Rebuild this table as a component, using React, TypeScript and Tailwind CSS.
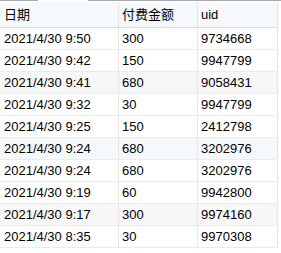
import React from "react";

interface Payment {
  date: string;
  amount: string;
  uid: string;
  bg?: string;
}

const payments: Payment[] = [
  { date: "2021/4/30 9:50", amount: "300", uid: "9734668" },
  { date: "2021/4/30 9:42", amount: "150", uid: "9947799" },
  { date: "2021/4/30 9:41", amount: "680", uid: "9058431", bg: "bg-[#f7f7f7]" },
  { date: "2021/4/30 9:32", amount: "30", uid: "9947799" },
  { date: "2021/4/30 9:25", amount: "150", uid: "2412798" },
  { date: "2021/4/30 9:24", amount: "680", uid: "3202976", bg: "bg-[#f5f9fc]" },
  { date: "2021/4/30 9:24", amount: "680", uid: "3202976" },
  { date: "2021/4/30 9:19", amount: "60", uid: "9942800" },
  { date: "2021/4/30 9:17", amount: "300", uid: "9974160", bg: "bg-[#f7f7f7]" },
  { date: "2021/4/30 8:35", amount: "30", uid: "9970308" },
];

const font = {
  fontFamily: '"Liberation Sans", "Noto Sans CJK SC", sans-serif',
};

export default function App() {
  return (
    <div className="w-[281px] h-[253px] bg-white text-black text-[13px]" style={font}>
      {/* tab strip edge */}
      <div className="flex h-px">
        <div className="w-[38px] bg-[#a8a8a8]" />
        <div className="w-[50px] bg-white" />
        <div className="flex-1 bg-[#a8a8a8]" />
      </div>
      <div className="h-px" />

      <div className="w-[278px]">
        <div className="grid grid-cols-[119px_79px_80px] h-[26px] bg-[#f6f9fb] border-b border-[#dedede]">
          <div className="flex items-center pl-1 border-r border-[#e3e3e3]">日期</div>
          <div className="flex items-center pl-[3px] border-r border-[#e3e3e3]">付费金额</div>
          <div className="flex items-center pl-[3px] border-r border-[#e3e3e3]">uid</div>
        </div>
        {payments.map((p, index) => (
          <div
            key={index}
            className={`grid grid-cols-[119px_79px_80px] h-[22px] border-b border-[#ebebeb] ${p.bg ?? "bg-white"}`}
          >
            <div className="flex items-center pl-1 border-r border-[#e6e6e6]">{p.date}</div>
            <div className="flex items-center pl-[3px] border-r border-[#e6e6e6]">{p.amount}</div>
            <div className="flex items-center pl-[3px] border-r border-[#e6e6e6]">{p.uid}</div>
          </div>
        ))}
      </div>
    </div>
  );
}
